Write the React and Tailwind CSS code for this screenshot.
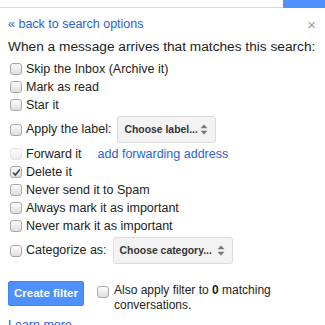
import React from "react";

function Box({ checked, faded }) {
  return (
    <span
      className={`relative inline-block w-[12px] h-[12px] rounded-[3px] border bg-gradient-to-b from-[#fcfcfc] to-[#dedede] shrink-0 ${
        faded ? "border-[#d4d4d4] opacity-60" : "border-[#a9a9a9]"
      }`}
    >
      {checked && (
        <svg className="absolute left-[1px] top-[1px]" width="9" height="9" viewBox="0 0 9 9">
          <path d="M1.2 4.6 L3.4 7 L7.8 1.6" fill="none" stroke="#444" strokeWidth="1.6" />
        </svg>
      )}
    </span>
  );
}

function Select({ label, width }) {
  return (
    <div
      className={`${width} h-[27px] flex items-center justify-between pl-[6px] pr-[7px] rounded-[3px] border border-[#dcdcdc] bg-[#f3f3f3] text-[10.4px] font-bold text-[#333] whitespace-nowrap`}
    >
      <span>{label}</span>
      <svg width="8" height="11" viewBox="0 0 8 11">
        <path d="M4 0.5 L7.5 4.2 H0.5 Z M4 10.5 L7.5 6.8 H0.5 Z" fill="#777" />
      </svg>
    </div>
  );
}

function Row({ children, checked, faded }) {
  return (
    <div className="flex items-center h-[18px] pl-[10px] gap-[4px] whitespace-nowrap">
      <Box checked={checked} faded={faded} />
      {children}
    </div>
  );
}

export default function App() {
  return (
    <div className="w-[325px] h-[325px] overflow-hidden bg-white text-[12.5px] text-[#222]" style={{ fontFamily: '"Liberation Sans", Arial, sans-serif' }}>
      <div className="flex h-[8px]">
        <div className="flex-1 border-b border-[#d9d9d9]" />
        <div className="w-[42px] bg-[#4d90fe]" />
      </div>

      <div className="flex items-center justify-between h-[30px] pl-[8px] pr-[9px] pt-[2px]">
        <a className="text-[#2a62d6]">« back to search options</a>
        <span className="text-[#999] text-[15px] leading-none">×</span>
      </div>

      <div className="pl-[8px] h-[18px] leading-[18px] mb-[4px] text-[13.7px] whitespace-nowrap">When a message arrives that matches this search:</div>

      <Row>Skip the Inbox (Archive it)</Row>
      <Row>Mark as read</Row>
      <Row>Star it</Row>
      <div className="flex items-center h-[31px] pl-[10px] gap-[4px] whitespace-nowrap">
        <Box />
        <span>Apply the label:</span>
        <div className="ml-[2px]">
          <Select label="Choose label..." width="w-[99px]" />
        </div>
      </div>
      <Row faded>
        <span>Forward it</span>
        <a className="ml-[12px] text-[#2a62d6]">add forwarding address</a>
      </Row>
      <Row checked>Delete it</Row>
      <Row>Never send it to Spam</Row>
      <Row>Always mark it as important</Row>
      <Row>Never mark it as important</Row>
      <div className="flex items-center h-[31px] pl-[10px] gap-[4px] whitespace-nowrap">
        <Box />
        <span>Categorize as:</span>
        <div className="ml-[2px]">
          <Select label="Choose category..." width="w-[120px]" />
        </div>
      </div>

      <div className="flex items-start pl-[8px] mt-[15px] gap-[13px]">
        <button className="w-[76px] h-[25px] rounded-[2px] bg-[#4d90fe] border border-[#3f84f5] text-white text-[11.5px] font-bold">
          Create filter
        </button>
        <div className="flex gap-[5px] pt-[2px]">
          <div className="pt-[2px]">
            <Box />
          </div>
          <div className="leading-[15px] w-[175px] text-[12px]">
            Also apply filter to <b>0</b> matching conversations.
          </div>
        </div>
      </div>
      <a className="block pl-[8px] mt-[3px] text-[#2a62d6]">Learn more</a>
    </div>
  );
}
